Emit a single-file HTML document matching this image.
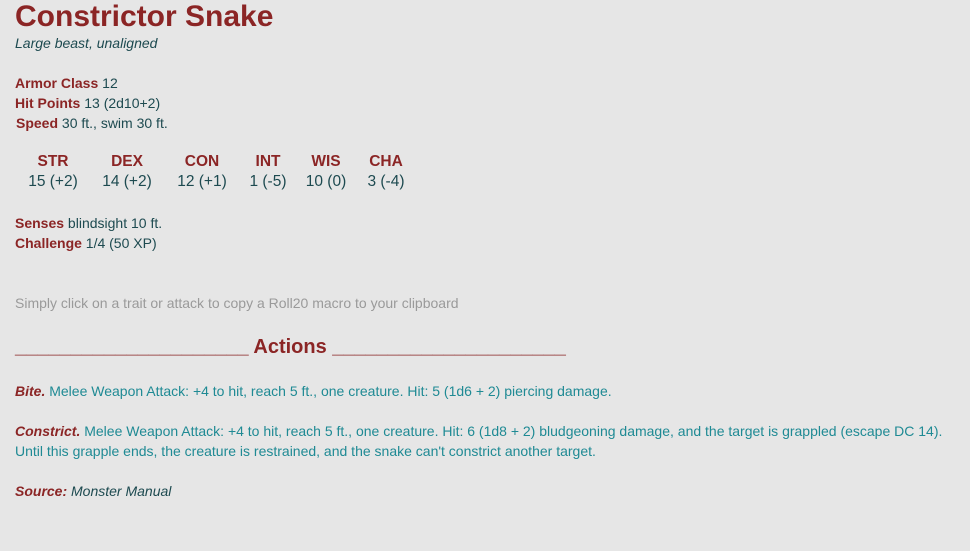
<!DOCTYPE html>
<html><head><style>
body{margin:0;background:#e6e6e6;font-family:"Liberation Sans",sans-serif;width:970px;height:551px;overflow:hidden;position:relative;color:#1d4a50}
.a{position:absolute;white-space:nowrap;font-size:14px;line-height:20px}
.r{color:#8b2525;font-weight:bold}
.c{position:absolute;width:70px;text-align:center;font-size:15.5px;line-height:20px}
.t{color:#1f8a94}
</style></head><body>
<div class="a r" style="left:15px;top:0;font-size:30px;line-height:34px">Constrictor Snake</div>
<div class="a" style="left:15px;top:33px;font-style:italic">Large beast, unaligned</div>
<div class="a" style="left:15px;top:73px"><span class="r">Armor Class</span> 12</div>
<div class="a" style="left:15px;top:93px"><span class="r">Hit Points</span> 13 (2d10+2)</div>
<div class="a" style="left:16px;top:113px"><span class="r">Speed</span> 30 ft., swim 30 ft.</div>
<div class="c r" style="left:18px;top:152px">STR</div><div class="c" style="left:18px;top:172px">15 (+2)</div>
<div class="c r" style="left:92px;top:152px">DEX</div><div class="c" style="left:92px;top:172px">14 (+2)</div>
<div class="c r" style="left:167px;top:152px">CON</div><div class="c" style="left:167px;top:172px">12 (+1)</div>
<div class="c r" style="left:233px;top:152px">INT</div><div class="c" style="left:233px;top:172px">1 (-5)</div>
<div class="c r" style="left:291px;top:152px">WIS</div><div class="c" style="left:291px;top:172px">10 (0)</div>
<div class="c r" style="left:351px;top:152px">CHA</div><div class="c" style="left:351px;top:172px">3 (-4)</div>
<div class="a" style="left:15px;top:213px"><span class="r">Senses</span> blindsight 10 ft.</div>
<div class="a" style="left:15px;top:233px"><span class="r">Challenge</span> 1/4 (50 XP)</div>
<div class="a" style="left:15px;top:293px;color:#9a9a9a">Simply click on a trait or attack to copy a Roll20 macro to your clipboard</div>
<div class="a r" style="left:15px;top:335px;font-size:20px;line-height:24px">_____________________ Actions _____________________</div>
<div class="a t" style="left:15px;top:381px"><i class="r">Bite.</i> Melee Weapon Attack: +4 to hit, reach 5 ft., one creature. Hit: 5 (1d6 + 2) piercing damage.</div>
<div class="a t" style="left:15px;top:421px"><i class="r">Constrict.</i> Melee Weapon Attack: +4 to hit, reach 5 ft., one creature. Hit: 6 (1d8 + 2) bludgeoning damage, and the target is grappled (escape DC 14).</div>
<div class="a t" style="left:15px;top:441px">Until this grapple ends, the creature is restrained, and the snake can't constrict another target.</div>
<div class="a" style="left:15px;top:481px;font-style:italic"><span class="r">Source:</span> Monster Manual</div>
</body></html>
